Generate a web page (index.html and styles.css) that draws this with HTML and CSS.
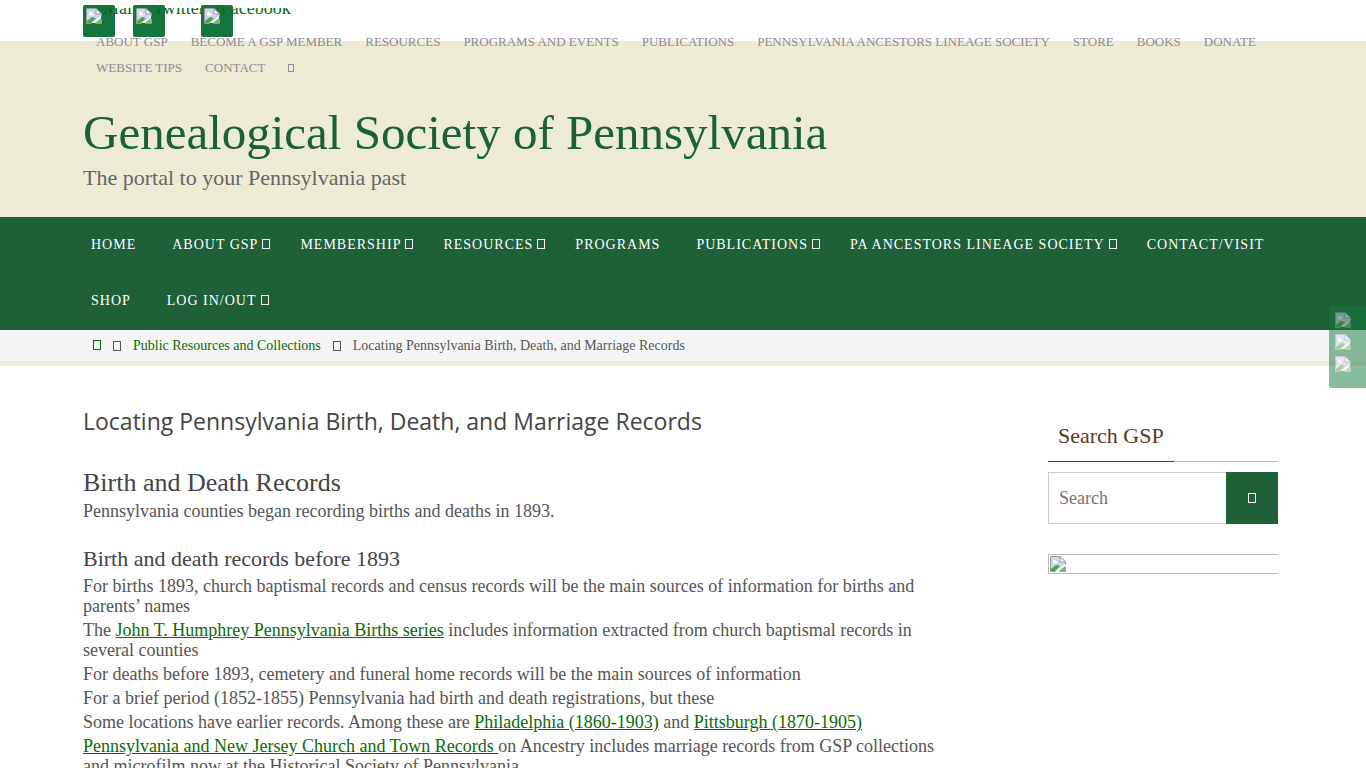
FILE: index.html
```html
<!DOCTYPE html>
<html lang="en">

<head>
    <meta charset="UTF-8">
    <meta name="viewport" content="width=device-width, initial-scale=1.0">
    <title>Locating Pennsylvania Birth, Death, and Marriage Records</title>
    <link rel="stylesheet" href="styles.css">
</head>

<body>
    <svg class="defs" width="0" height="0" aria-hidden="true">
        <symbol id="picture" viewBox="0 0 16 16">
            <path d="M1 1h9l5 5v9H1z" fill="#c9d8f2" />
            <path d="M3 5.500a1.500 1.500 0 0 1 3-.5 1.500 1.500 0 0 1 1 2.500H3z" fill="#fff" />
            <path d="M1 15v-2l5-4 4 1-5 5z" fill="#4da345" />
            <path d="M15 8v2L9 15H6z" fill="#fff" />
            <path d="M15 10v5H9z" fill="#7cba70" />
            <path d="M.5 .5h9.500l5.500 5.500M.5 .5v15h5M15.500 6v2.500M15.500 11v4.500H9.500" fill="none" stroke="#9a9a9a" />
            <path d="M10 .5V6h5.500z" fill="#fff" stroke="#9a9a9a" />
        </symbol>
    </svg>

    <div class="topbar">
        <div class="wrap">
            <ul class="socials">
                <li><a href="#"><span class="tile"><svg class="pic"><use href="#picture" /></svg></span><span class="alt">Mail</span></a></li>
                <li><a href="#"><span class="tile"><svg class="pic"><use href="#picture" /></svg></span><span class="alt">Twitter</span></a></li>
                <li><a href="#"><span class="tile"><svg class="pic"><use href="#picture" /></svg></span><span class="alt">Facebook</span></a></li>
            </ul>
            <nav class="topmenu">
                <a href="#">ABOUT GSP</a>
                <a href="#">BECOME A GSP MEMBER</a>
                <a href="#">RESOURCES</a>
                <a href="#">PROGRAMS AND EVENTS</a>
                <a href="#">PUBLICATIONS</a>
                <a href="#">PENNSYLVANIA ANCESTORS LINEAGE SOCIETY</a>
                <a href="#">STORE</a>
                <a href="#">BOOKS</a>
                <a href="#">DONATE</a>
                <a href="#">WEBSITE TIPS</a>
                <a href="#">CONTACT</a>
                <a href="#" aria-label="Search"><i class="glyph small"></i></a>
            </nav>
        </div>
    </div>

    <header class="header">
        <div class="wrap">
            <div class="site-title"><a href="#">Genealogical Society of Pennsylvania</a></div>
            <div class="tagline">The portal to your Pennsylvania past</div>
        </div>
    </header>

    <nav class="mainnav">
        <div class="wrap">
            <ul class="menu">
                <li><a href="#">HOME</a></li>
                <li class="has-sub"><a href="#">ABOUT GSP<i class="glyph"></i></a></li>
                <li class="has-sub"><a href="#">MEMBERSHIP<i class="glyph"></i></a></li>
                <li class="has-sub"><a href="#">RESOURCES<i class="glyph"></i></a></li>
                <li><a href="#">PROGRAMS</a></li>
                <li class="has-sub"><a href="#">PUBLICATIONS<i class="glyph"></i></a></li>
                <li class="has-sub"><a href="#">PA ANCESTORS LINEAGE SOCIETY<i class="glyph"></i></a></li>
                <li><a href="#">CONTACT/VISIT</a></li>
                <li><a href="#">SHOP</a></li>
                <li class="has-sub"><a href="#">LOG IN/OUT<i class="glyph"></i></a></li>
            </ul>
        </div>
    </nav>

    <div class="breadcrumbs">
        <div class="wrap crumbs">
            <a href="#" aria-label="Home"><i class="glyph"></i></a>
            <i class="glyph"></i>
            <a href="#">Public Resources and Collections</a>
            <i class="glyph"></i>
            <span>Locating Pennsylvania Birth, Death, and Marriage Records</span>
        </div>
    </div>

    <div class="wrap content">
        <main>
            <h1>Locating Pennsylvania Birth, Death, and Marriage Records</h1>
            <h2>Birth and Death Records</h2>
            <p>Pennsylvania counties began recording births and deaths in 1893.</p>
            <h3>Birth and death records before 1893</h3>
            <ul class="records">
                <li>For births 1893, church baptismal records and census records will be the main sources of information for births and parents’ names</li>
                <li>The <a href="#">John T. Humphrey Pennsylvania Births series</a> includes information extracted from church baptismal records in several counties</li>
                <li>For deaths before 1893, cemetery and funeral home records will be the main sources of information</li>
                <li>For a brief period (1852-1855) Pennsylvania had birth and death registrations, but these</li>
                <li>Some locations have earlier records. Among these are <a href="#">Philadelphia (1860-1903)</a> and <a href="#">Pittsburgh (1870-1905)</a></li>
                <li><a href="#">Pennsylvania and New Jersey Church and Town Records </a>on Ancestry includes marriage records from GSP collections and microfilm now at the Historical Society of Pennsylvania</li>
            </ul>
        </main>

        <aside>
            <h3 class="widget-title"><span>Search GSP</span></h3>
            <form class="search">
                <input type="search" placeholder="Search" aria-label="Search">
                <button type="button" aria-label="Search"><i class="glyph"></i></button>
            </form>
            <div class="banner"><svg class="pic"><use href="#picture" /></svg></div>
        </aside>
    </div>

    <div class="side-socials">
        <a href="#" aria-label="Mail"><svg class="pic"><use href="#picture" /></svg></a>
        <a href="#" aria-label="Twitter"><svg class="pic"><use href="#picture" /></svg></a>
        <a href="#" aria-label="Facebook"><svg class="pic"><use href="#picture" /></svg></a>
    </div>
</body>

</html>
```

FILE: styles.css
```css
* {
    margin: 0;
    padding: 0;
    box-sizing: border-box;
}

body {
    font-family: "Liberation Serif", "Times New Roman", serif;
    font-size: 18px;
    line-height: 20px;
    color: #555;
    background-color: #fefefe;
}

ul {
    list-style: none;
}

a {
    color: #0b6b0b;
}

.defs {
    position: absolute;
}

.wrap {
    max-width: 1200px;
    margin: 0 auto;
}

.pic {
    display: block;
    width: 16px;
    height: 16px;
}

.glyph {
    display: inline-block;
    width: 8px;
    height: 10px;
    border: 1px solid currentColor;
}

.glyph.small {
    width: 6px;
    height: 8px;
}

/* top bar */
.topbar {
    height: 41px;
    padding-top: 5px;
    position: relative;
    z-index: 1;
}

.socials {
    display: flex;
    height: 24px;
}

.socials a {
    display: block;
    padding: 3px 0 0 20px;
    margin-right: -4px;
    position: relative;
    text-decoration: none;
}

.tile {
    width: 32px;
    height: 32px;
    padding: 3px;
    border-radius: 2px;
    background-color: #15753f;

    position: absolute;
    top: 0;
    left: 0;
}

.alt {
    display: block;
    height: 14px;
    line-height: 0;
    overflow: hidden;
    position: relative;
}

.topmenu {
    display: flex;
    flex-wrap: wrap;
    column-gap: 23px;
    padding: 0 13px;
    font-size: 13px;
    line-height: 26px;
}

.topmenu a {
    color: #8f8c90;
    text-decoration: none;
}

/* header */
.header {
    padding: 62px 0 26px;
    background-color: #edebd5;
}

.site-title {
    font-family: Georgia, "Liberation Serif", serif;
    font-size: 49px;
    line-height: 60px;
}

.site-title a {
    color: #1a6038;
    text-decoration: none;
}

.tagline {
    padding-top: 2px;
    font-size: 22px;
    line-height: 26px;
    color: #666;
}

/* main menu */
.mainnav {
    background-color: #1e6038;
    padding-bottom: 1px;
}

.menu {
    display: flex;
    flex-wrap: wrap;
    padding-left: 8px;
}

.menu li {
    padding-right: 36px;
}

.menu .has-sub {
    padding-right: 30px;
}

.menu li:nth-child(8) {
    padding-right: 8px;
}

.menu a {
    display: block;
    color: #fff;
    font-size: 14px;
    line-height: 56px;
    letter-spacing: 1px;
    text-decoration: none;
}

.menu .glyph {
    margin-left: 4px;
}

/* breadcrumbs */
.breadcrumbs {
    background-color: #f5f5f5;
    border-bottom: 5px solid #edebd5;
    font-size: 14px;
    line-height: 31px;
}

.crumbs {
    display: flex;
    align-items: center;
    gap: 12px;
    padding-left: 10px;
}

.crumbs a {
    text-decoration: none;
}

/* content */
.content {
    display: grid;
    grid-template-columns: 1fr 230px;
    column-gap: 95px;
    padding: 37px 5px 0 0;
}

h1,
h2,
h3 {
    font-weight: normal;
    color: #444;
}

h1 {
    font-family: "Trebuchet MS", "Open Sans", sans-serif;
    font-size: 23px;
    line-height: 36px;
}

h2 {
    margin: 28px 0 2px;
    font-size: 26px;
    line-height: 32px;
}

h3 {
    margin: 24px 0 3px;
    font-size: 22px;
    line-height: 28px;
}

.records li {
    margin-bottom: 4px;
}

/* sidebar */
.widget-title {
    margin: 9px 0 10px;
    line-height: 47px;
    color: #5a3a1a;
    border-bottom: 1px solid #bbb;
}

.widget-title span {
    display: inline-block;
    padding: 0 10px 2px;
    margin-bottom: -1px;
    border-bottom: 1px solid #444;
    vertical-align: top;
}

.search {
    display: flex;
    height: 52px;
}

.search input {
    flex: 1;
    min-width: 0;
    padding: 0 10px;
    border: 1px solid #ccc;
    border-right: 0;
    background-color: #fefefe;
    font: inherit;
}

.search input::placeholder {
    color: #777;
}

.search button {
    width: 52px;
    border: 0;
    background-color: #1e6038;
    color: #fff;
}

.banner {
    margin-top: 30px;
    padding: 1px;
    border: 1px solid #bbb;
    border-right: 0;
}

/* floating buttons */
.side-socials {
    width: 37px;
    height: 82px;
    padding: 6px;
    display: grid;
    row-gap: 6px;
    align-content: start;
    background-color: #157941;
    border-radius: 2px 0 0 2px;
    opacity: 0.5;

    position: fixed;
    top: 306px;
    right: 0;
    z-index: 2;
}
```
